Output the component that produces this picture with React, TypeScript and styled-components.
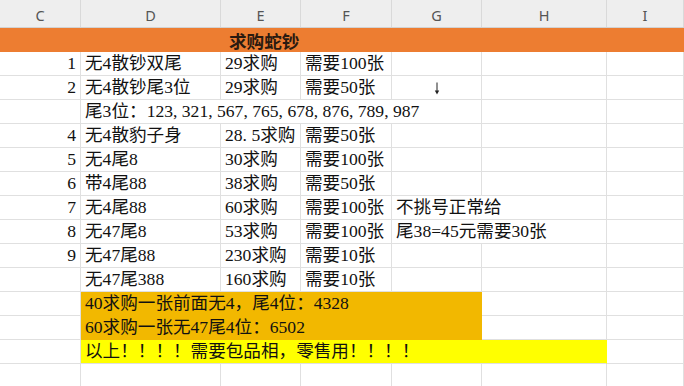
import React from 'react';
import styled, { createGlobalStyle } from 'styled-components';

const GlobalStyle = createGlobalStyle`
  html, body { margin: 0; padding: 0; background: #ffffff; overflow: hidden; }
  #root { width: 684px; height: 386px; overflow: hidden; }
`;

const COLS = '81px 140px 80px 91px 90px 125px 1fr';
const GRID = '#e0e0e0';
const ORANGE = '#ED7D31';
const GOLD = '#F2B800';
const YELLOW = '#FFFF00';

const Sheet = styled.div`
  display: flex;
  flex-direction: column;
  width: 684px;
`;

const HeaderRow = styled.div`
  display: grid;
  grid-template-columns: ${COLS};
  height: 28px;
  background: #eeeeee;
  border-bottom: 1px solid #d2d2d2;
  box-sizing: border-box;
`;

const HeaderCell = styled.div`
  display: flex;
  align-items: center;
  justify-content: center;
  box-sizing: border-box;
  padding-top: 2px;
  border-right: 1px solid #d9d9d9;
  font-family: 'Noto Sans', 'Open Sans', sans-serif;
  font-size: 14.5px;
  color: #555555;
`;

const Row = styled.div`
  display: grid;
  grid-template-columns: ${COLS};
  height: 24px;
`;

const TitleRow = styled.div`
  display: flex;
  align-items: center;
  height: 24px;
  background: ${ORANGE};
  padding-left: 229px;
  box-sizing: border-box;
  font-family: 'Liberation Serif', 'Noto Sans CJK SC', serif;
  font-size: 17.6px;
  font-weight: 700;
  color: #2a1a10;
`;

const Cell = styled.div<{ $span?: number; $align?: 'left' | 'right' | 'center'; $fill?: string; $bottom?: string }>`
  box-sizing: border-box;
  grid-column: span ${(p) => p.$span ?? 1};
  border-right: 1px solid ${(p) => p.$fill ?? GRID};
  border-bottom: 1px solid ${(p) => p.$bottom ?? p.$fill ?? GRID};
  background: ${(p) => p.$fill ?? 'transparent'};
  padding: 0 4px;
  display: flex;
  align-items: center;
  justify-content: ${(p) => (p.$align === 'right' ? 'flex-end' : p.$align === 'center' ? 'center' : 'flex-start')};
  white-space: nowrap;
  overflow: visible;
  font-family: 'Liberation Serif', 'Noto Sans CJK SC', serif;
  font-size: 17.6px;
  line-height: 23px;
  color: #111111;
`;

const Half = styled.span`
  display: inline-block;
  width: 0.5em;
  text-align: left;
`;

const ArrowIcon = () => (
  <svg width="6" height="13" viewBox="0 0 6 13" aria-hidden="true">
    <line x1="3" y1="0.5" x2="3" y2="9" stroke="#222" strokeWidth="1" />
    <path d="M0.8 8.5 L5.2 8.5 L3 12.5 Z" fill="#222" />
  </svg>
);

const ArrowWrap = styled.span`
  display: flex;
  margin-top: 2px;
`;

const withHalf = (s: string) =>
  s.split('').map((ch, i) => (ch === ',' || ch === '.' ? <Half key={i}>{ch}</Half> : <React.Fragment key={i}>{ch}</React.Fragment>));

type DataRow = { n?: string; d: string; e: string; f: string; g?: React.ReactNode; gSpan?: number };

const rows: DataRow[] = [
  { n: '1', d: '无4散钞双尾', e: '29求购', f: '需要100张' },
  { n: '2', d: '无4散钞尾3位', e: '29求购', f: '需要50张', g: 'arrow' },
];

const rows2: DataRow[] = [
  { n: '4', d: '无4散豹子身', e: '28.5求购', f: '需要50张' },
  { n: '5', d: '无4尾8', e: '30求购', f: '需要100张' },
  { n: '6', d: '带4尾88', e: '38求购', f: '需要50张' },
  { n: '7', d: '无4尾88', e: '60求购', f: '需要100张', g: '不挑号正常给', gSpan: 2 },
  { n: '8', d: '无47尾8', e: '53求购', f: '需要100张', g: '尾38=45元需要30张', gSpan: 2 },
  { n: '9', d: '无47尾88', e: '230求购', f: '需要10张' },
  { d: '无47尾388', e: '160求购', f: '需要10张' },
];

const Data = ({ r }: { r: DataRow }) => (
  <Row>
    <Cell $align="right">{r.n}</Cell>
    <Cell>{r.d}</Cell>
    <Cell>{withHalf(r.e)}</Cell>
    <Cell>{r.f}</Cell>
    {r.g === 'arrow' ? (
      <Cell $align="center">
        <ArrowWrap>
          <ArrowIcon />
        </ArrowWrap>
      </Cell>
    ) : (
      <Cell $span={r.gSpan ?? 1}>{r.g}</Cell>
    )}
    {(r.gSpan ?? 1) === 1 && <Cell />}
    <Cell />
  </Row>
);

export default function App() {
  return (
    <>
      <GlobalStyle />
      <Sheet>
        <HeaderRow>
          {['C', 'D', 'E', 'F', 'G', 'H', 'I'].map((c) => (
            <HeaderCell key={c}>{c}</HeaderCell>
          ))}
        </HeaderRow>
        <TitleRow>求购蛇钞</TitleRow>
        {rows.map((r, i) => (
          <Data key={'a' + i} r={r} />
        ))}
        <Row>
          <Cell />
          <Cell $span={4}>{withHalf('尾3位：123,321,567,765,678,876,789,987')}</Cell>
          <Cell />
          <Cell />
        </Row>
        {rows2.map((r, i) => (
          <Data key={'b' + i} r={r} />
        ))}
        <Row>
          <Cell />
          <Cell $span={4} $fill={GOLD}>40求购一张前面无4，尾4位：4328</Cell>
          <Cell />
          <Cell />
        </Row>
        <Row>
          <Cell />
          <Cell $span={4} $fill={GOLD}>60求购一张无47尾4位：6502</Cell>
          <Cell />
          <Cell />
        </Row>
        <Row>
          <Cell />
          <Cell $span={5} $fill={YELLOW} $bottom={GRID}>以上！！！！需要包品相，零售用！！！！</Cell>
          <Cell />
        </Row>
        <Row>
          <Cell />
          <Cell />
          <Cell />
          <Cell />
          <Cell />
          <Cell />
          <Cell />
        </Row>
      </Sheet>
    </>
  );
}
